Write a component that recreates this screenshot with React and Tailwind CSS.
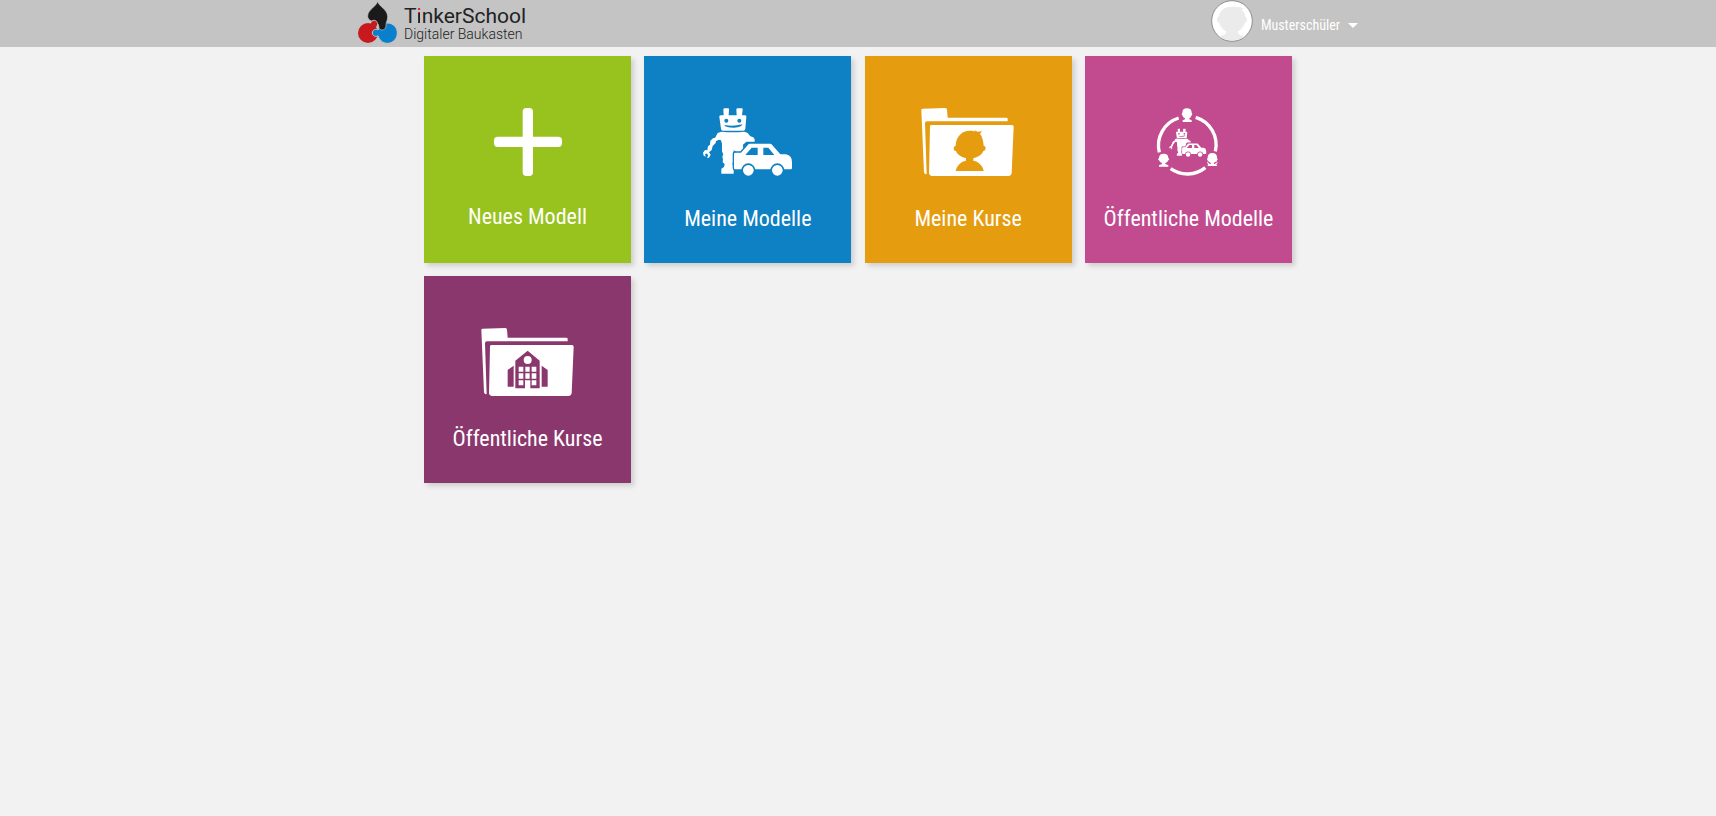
const LABEL_FONT = "font-['Roboto_Condensed','Roboto',sans-serif]";

function Logo() {
  return (
    <svg viewBox="24 0 120 135" className="h-[45px] w-10 shrink-0" aria-hidden="true">
      <circle cx="54" cy="99" r="30" fill="#c8191e" />
      <path d="M54 80C60 78 62 75 63 70C65 59 82 60 82 71C82 78 76 80 77 88L70 104Z" fill="#c8191e" />
      <g fill="#0a80cc" stroke="#c4c4c4" strokeWidth="3">
        <path d="M84 90C77 85 67 90 67 99C67 108 78 112 84 107C88 120 98 130 112 130C129 130 142 116 142 99C142 82 129 69 112 69C98 69 89 78 84 90Z" />
      </g>
      <path
        d="M83 3C85 20 113 27 113 50C113 61 108 66 108 75C109 93 90 93 87 84C86 78 86 72 83 71C81 60 71 59 64 63C57 60 53 55 53 48C54 27 80 20 83 3Z"
        fill="#1a1a1b"
        stroke="#c4c4c4"
        strokeWidth="2"
      />
    </svg>
  );
}

function Avatar() {
  return (
    <svg viewBox="0 0 126 126" className="h-[42px] w-[42px] shrink-0" aria-hidden="true">
      <circle cx="63" cy="63" r="61" fill="#fff" stroke="#8f8f8f" strokeWidth="3" />
      <path
        d="M24 48C27 29 44 20 62 20C70 20 77 20 80 22L90 20L89 25L98 24L93 31C99 36 102 43 103 51C110 55 110 66 101 69C97 83 88 91 80 94C80 104 90 106 101 110C78 124 48 124 25 110C36 106 46 104 46 94C38 91 29 83 25 69C16 67 16 54 24 48Z"
        fill="#ebebeb"
      />
    </svg>
  );
}

function PlusIcon() {
  return (
    <svg viewBox="0 0 204 204" className="h-[68px] w-[68px]" fill="#fff" aria-hidden="true">
      <rect x="86" y="0" width="31" height="204" rx="11" />
      <rect x="0" y="86" width="204" height="31" rx="11" />
    </svg>
  );
}

function RobotAndCar({ bg }) {
  return (
    <g fill="#fff">
      <path d="M99 43Q99 39 103 39H113Q117 39 116 43L115 60H139L138 43Q138 39 142 39H154Q158 39 157 43L155 60H164Q169 60 168 65L165 100Q165 106 159 106H98Q92 106 92 100L87 65Q86 60 91 60H100Z" />
      <circle cx="108" cy="76" r="6" fill={bg} />
      <circle cx="147" cy="76" r="6" fill={bg} />
      <path d="M102 89Q130 94 156 87Q155 96 131 97Q105 97 102 89Z" fill={bg} />
      <path d="M93 109Q127 113 162 109L172 113L180 123L189 126Q195 131 193 139H168L158 148L159 170L146 178L131 165H130V200L126 204L130 217V235H93V220L101 215L103 206L97 201L98 193L96 183L99 178L95 168V145L92 135L86 133L77 137L76 143L67 152L64 164L56 171L61 178L56 187L50 187L54 179L47 174L44 179L47 184L40 181L38 172L44 164L51 165L53 153L59 148L60 136L69 128L74 128L82 113Z" />
      <path
        d="M131 176Q131 172 135 172H152L173 148Q175 145 179 145H240Q243 145 245 148L270 177H287Q305 180 305 201V218Q305 222 301 222H134Q131 222 131 219Z"
        stroke={bg}
        strokeWidth="8"
        paintOrder="stroke"
      />
      <path d="M165 179L184 157H202V179ZM219 157H234L252 179H219Z" fill={bg} />
      <circle cx="174" cy="225" r="21" fill={bg} />
      <circle cx="261" cy="225" r="21" fill={bg} />
      <circle cx="174" cy="225" r="16" />
      <circle cx="261" cy="225" r="16" />
    </g>
  );
}

function ModelIcon() {
  return (
    <svg viewBox="23 38 300 210" className="h-[70px] w-[100px]" aria-hidden="true">
      <RobotAndCar bg="#0e80c4" />
    </svg>
  );
}

function Folder() {
  return (
    <g fill="#fff">
      <path d="M185 179Q185 175 189 175L257 173Q262 173 262 178L264 202H440Q444 202 444 206V213H202Q196 213 196 219L201 371Q194 373 193 366Z" />
      <path d="M211 228Q211 224 216 224H457Q462 224 462 229L456 369Q455 377 448 377H216Q208 376 208 369Z" />
    </g>
  );
}

function CourseIcon() {
  return (
    <svg viewBox="175 173 300 210" className="h-[70px] w-[100px]" aria-hidden="true">
      <Folder />
      <path
        d="M288 286C289 259 306 241 331 241C338 241 344 242 347 244L345 239L353 244L367 243L361 250C368 259 371 272 372 286C380 287 380 300 371 302C366 314 354 321 341 323V331C358 334 370 347 372 362H288C291 347 302 334 319 331V323C306 321 294 314 289 302C280 301 280 288 288 286Z"
        fill="#e69c0f"
      />
    </svg>
  );
}

function SchoolIcon() {
  return (
    <svg viewBox="175 173 300 210" className="h-[70px] w-[100px]" aria-hidden="true">
      <Folder />
      <g fill="#8a376e">
        <path d="M287 271L324 241L360 271V354H332V330H316V354H287Z" />
        <path d="M264 299L282 286V349H264ZM366 286L384 299V349H366Z" />
      </g>
      <g fill="#fff">
        <circle cx="324" cy="269" r="12" />
        <path d="M297 289H311V304H297ZM317 289H330V304H317ZM336 289H350V304H336ZM297 309H311V325H297ZM317 309H330V325H317ZM336 309H350V325H336ZM297 330H311V345H297ZM336 330H350V345H336Z" />
      </g>
    </svg>
  );
}

function NetworkIcon() {
  return (
    <svg viewBox="176 173 300 210" className="h-[70px] w-[100px]" aria-hidden="true">
      <g fill="none" stroke="#fff" strokeWidth="10">
        <path d="M298 203A86 86 0 0 0 240 306" />
        <path d="M349 201A86 86 0 0 1 408 303" />
        <path d="M274 355A86 86 0 0 0 378 352" />
      </g>
      <g fill="#fff">
        <path d="M309 187Q309 174 323 174Q337 174 337 187L339 192L336 197Q334 202 330 204V207L337 210V215H310V210L317 207V204Q312 202 310 197L307 192Z" />
        <path d="M239 323Q239 310 253 310Q267 310 267 323L270 327L266 331Q264 336 258 338V341L267 345V349H239V345L248 341V338Q242 336 240 331L236 327Z" />
        <path d="M385 322Q385 308 399 308Q413 308 413 322L415 327L412 332L415 338L411 342L414 347H384L387 342L383 338L386 332L383 327Z" />
      </g>
      <path d="M386 334L394 340M412 334L404 340" stroke="#c24a8f" strokeWidth="4" />
      <g transform="translate(254 219) scale(.415)">
        <RobotAndCar bg="#c24a8f" />
      </g>
    </svg>
  );
}

const TILES = [
  { label: "Neues Modell", color: "bg-[#98c21d]", Icon: PlusIcon },
  { label: "Meine Modelle", color: "bg-[#0e80c4]", Icon: ModelIcon },
  { label: "Meine Kurse", color: "bg-[#e69c0f]", Icon: CourseIcon },
  { label: "Öffentliche Modelle", color: "bg-[#c24a8f]", Icon: NetworkIcon },
  { label: "Öffentliche Kurse", color: "bg-[#8a376e]", Icon: SchoolIcon },
];

function Tile({ label, color, Icon }) {
  return (
    <a
      href="#"
      className={`flex aspect-square flex-col items-center gap-[25px] pt-[52px] text-white shadow-[3px_3px_5px_rgba(0,0,0,0.15)] ${color}`}
    >
      <Icon />
      <span className={`text-[22px] leading-8 whitespace-nowrap ${LABEL_FONT}`}>{label}</span>
    </a>
  );
}

export default function App() {
  return (
    <div className="min-h-screen bg-[#f2f2f2]">
      <header className="bg-[#c4c4c4]">
        <div className="mx-auto flex h-[47px] max-w-[1000px] items-start justify-between">
          <a href="#" className="flex items-start gap-[6px] font-['Roboto',sans-serif]">
            <Logo />
            <span className="flex flex-col pt-1 text-[#222]">
              <span className="text-[21px] leading-6">
                T<span className="bg-[linear-gradient(#e3131b_9px,#222_9px)] bg-clip-text text-transparent">i</span>nkerSchool
              </span>
              <span className="text-sm leading-3 font-light">Digitaler Baukasten</span>
            </span>
          </a>
          <button type="button" className="flex items-center gap-2 text-white">
            <Avatar />
            <span className={`pt-2 text-sm leading-5 ${LABEL_FONT}`}>Musterschüler</span>
            <svg viewBox="0 0 10 5" className="mt-2 h-[5px] w-[10px]" aria-hidden="true">
              <path d="M0 0H10L5 5Z" fill="#fff" />
            </svg>
          </button>
        </div>
      </header>
      <main className="mx-auto grid max-w-[868px] grid-cols-[repeat(auto-fill,207px)] justify-between gap-y-[13px] pt-[9px]">
        {TILES.map((tile) => (
          <Tile key={tile.label} {...tile} />
        ))}
      </main>
    </div>
  );
}
